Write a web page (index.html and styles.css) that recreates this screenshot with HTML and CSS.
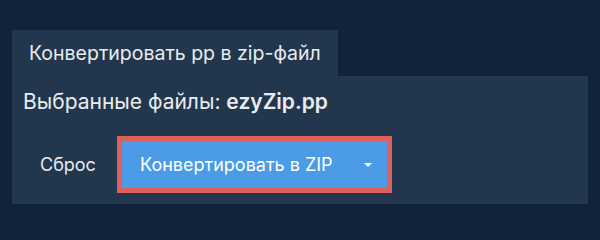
FILE: index.html
```html
<!DOCTYPE html>
<html lang="ru">
<head>
<meta charset="utf-8">
<link rel="stylesheet" href="styles.css">
</head>
<body>
<div class="wrap">
  <div class="tab">Конвертировать pp в zip-файл</div>
  <div class="panel">
    <div class="files">Выбранные файлы: <b>ezyZip.pp</b></div>
    <div class="actions">
      <span class="reset">Сброс</span>
      <div class="convert">
        <span class="label">Конвертировать в ZIP</span>
        <span class="caret"></span>
      </div>
    </div>
  </div>
</div>
</body>
</html>
```
FILE: styles.css
```css
html, body {
  margin: 0;
  padding: 0;
  background: #11233a;
  font-family: Inter, "Noto Sans", sans-serif;
  color: #e9ecef;
}
.wrap {
  padding: 30px 12px 0 12px;
}
.tab {
  display: inline-block;
  background: #22374e;
  font-size: 19.5px;
  line-height: 46px;
  height: 46px;
  padding: 0 17px 0 17px;
}
.panel {
  background: #22374e;
  height: 128px;
  box-sizing: border-box;
  padding: 10px 0 0 11px;
}
.files {
  font-size: 21px;
  line-height: 32px;
}
.files b {
  font-weight: 600;
}
.actions {
  display: flex;
  align-items: center;
  margin-top: 18px;
}
.reset {
  font-size: 18px;
  margin-left: 17px;
  width: 77px;
}
.convert {
  display: flex;
  align-items: center;
  box-sizing: border-box;
  width: 275px;
  height: 57px;
  background: #4b9be6;
  border: 5px solid #dc5f5b;
  padding: 0 0 0 18px;
}
.label {
  font-size: 18px;
  color: #fff;
}
.caret {
  margin-left: auto;
  margin-right: 15px;
  width: 0;
  height: 0;
  border-left: 4px solid transparent;
  border-right: 4px solid transparent;
  border-top: 4px solid #fff;
}
```
